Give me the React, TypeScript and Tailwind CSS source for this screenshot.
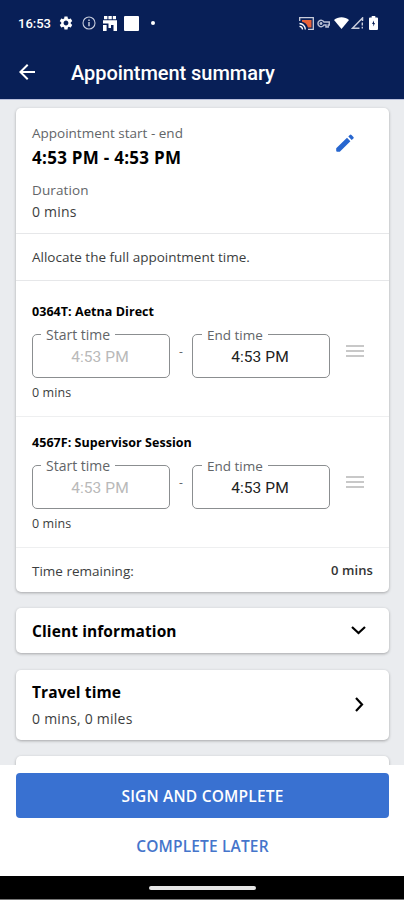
import { MdArrowBack, MdSettings } from "react-icons/md";

const services = [
  { id: 1, name: "0364T: Aetna Direct", start: "4:53 PM", end: "4:53 PM", rowClass: "h-[136px] pt-[20px]" },
  { id: 2, name: "4567F: Supervisor Session", start: "4:53 PM", end: "4:53 PM", rowClass: "h-[131px] pt-[15px]" },
];

function StatusBar() {
  return (
    <div className="flex h-[46px] items-center pl-[18px] pr-[26px] text-white">
      <span className="w-[34px] font-['Roboto',sans-serif] text-[13px] font-medium leading-none">16:53</span>
      <MdSettings size={16} className="ml-[6px]" />
      <svg className="ml-[8px]" width="14" height="14" viewBox="0 0 14 14" fill="none" stroke="#c5cbdc">
        <circle cx="7" cy="7" r="6" strokeWidth="1.1" />
        <path d="M7 6v4.2M7 3.6v1.4" strokeWidth="1.5" />
      </svg>
      <svg className="ml-[7px]" width="14" height="15" viewBox="0 0 14 15" fill="#fff">
        <path d="M1 0h3.4v3.2H1zM5.4 0h3.4v3.2H5.4zM9.8 0H13v3.2H9.8zM0 4.2h14V15h-3.5V9H8v3H5.500V7.500H0zM0 9h3.600v6H0z" />
      </svg>
      <div className="ml-[7px] h-[15px] w-[15px] rounded-[1px] bg-white" />
      <div className="ml-[12px] h-[4px] w-[4px] rounded-full bg-white" />

      {/* Right side indicators */}
      <div className="ml-auto flex items-center">
        <svg width="15" height="13" viewBox="0 0 15 13" fill="none">
          <path d="M.7 4V.7h13.6v11.6H9" stroke="#c9cddb" strokeWidth="1.3" />
          <path d="M3 3h9.5v7.5H9C8 7 6 5.5 3 4.8z" fill="#e8633a" />
          <path d="M.5 6.5a6 6 0 0 1 5.8 6M.5 9.3a3.2 3.2 0 0 1 3 3.2" stroke="#fff" strokeWidth="1.3" />
        </svg>
        <svg className="ml-[3px]" width="13" height="9" viewBox="0 0 13 9" fill="none" stroke="#b9c0d5" strokeWidth="1.5">
          <path d="M7 3A3.2 3.2 0 1 0 7 6H9V8H11.2V6H12.3V3z" />
          <circle cx="4" cy="4.5" r=".7" />
        </svg>
        <svg className="ml-[4px]" width="15" height="12" viewBox="0 0 15 12" fill="#fff">
          <path d="M0 3C4-.8 11-.8 15 3L7.5 12z" />
        </svg>
        <svg className="ml-[2px]" width="13" height="12" viewBox="0 0 13 12" fill="none" stroke="#c9cddb">
          <path d="M8.5 11.2H1.5L11.5 1v3" strokeWidth="1.5" />
          <path d="M11.3 5.5v3M11.3 9.8v1.7" strokeWidth="1.4" />
        </svg>
        <svg className="ml-[5px]" width="9" height="14" viewBox="0 0 9 14">
          <path d="M2.7 0h3.6v1.4H8a1 1 0 0 1 1 1V13a1 1 0 0 1-1 1H1a1 1 0 0 1-1-1V2.4a1 1 0 0 1 1-1h1.7z" fill="#fff" />
          <path d="M5 4.5L3 8h1.3v2.5L6 7H5z" fill="#081f57" />
        </svg>
      </div>
    </div>
  );
}

function TimeField({ label, value, labelClass, valueClass }: any) {
  return (
    <div className="relative flex h-[44px] w-[138px] items-center justify-center rounded-[5px] border-[1.5px] border-[#8b8e90]">
      <span className={`absolute -top-[9px] whitespace-nowrap bg-white px-[5px] leading-[18px] text-[#626568] ${labelClass}`}>
        {label}
      </span>
      <span className={`pr-[2px] pt-[2px] font-['Roboto',sans-serif] text-[15.5px] leading-5 tracking-[0.1px] ${valueClass}`}>
        {value}
      </span>
    </div>
  );
}

function DragHandle() {
  return (
    <div className="mb-[10px] ml-4 flex w-[18px] flex-col gap-[3px]">
      <div className="h-[2px] bg-[#c8c8c8]" />
      <div className="h-[2px] bg-[#c8c8c8]" />
      <div className="h-[2px] bg-[#c8c8c8]" />
    </div>
  );
}

export default function App() {
  return (
    <div className="flex h-[900px] w-[404px] flex-col overflow-hidden bg-[#eaecef] font-['Open_Sans',sans-serif]">
      <header className="h-[100px] shrink-0 border-b border-[#b9bfdc] bg-[#081f57]">
        <StatusBar />
        <div className="flex h-[54px] items-center pl-[15px]">
          <MdArrowBack size={24} className="-mt-[2px] text-white" />
          <h1 className="ml-[32px] font-['Roboto',sans-serif] text-[20px] font-medium leading-none tracking-[-0.05px] text-white">
            Appointment summary
          </h1>
        </div>
      </header>

      <main className="flex min-h-0 flex-1 flex-col gap-4 overflow-hidden pl-4 pr-[15px] pt-2">
        <section className="h-[484px] shrink-0 rounded-[5px] bg-white shadow-[0_1px_3px_rgba(0,0,0,0.3)]">
          {/* Appointment time */}
          <div className="flex h-[126px] justify-between border-b border-[#e6e7e9] pl-4 pr-[34px] pt-[13px]">
            <div>
              <p className="text-[13.5px] leading-6 text-[#626568]">Appointment start - end</p>
              <p className="pt-px text-[17px] font-bold leading-6 tracking-[0.28px] text-black">4:53 PM - 4:53 PM</p>
              <p className="mt-[9px] text-[13.5px] leading-[22px] tracking-[0.1px] text-[#626568]">Duration</p>
              <p className="text-[14px] leading-[22px] tracking-[0.2px] text-[#3c3e40]">0 mins</p>
            </div>
            <svg className="mt-[12px]" width="20" height="20" viewBox="0 0 20 20" fill="#2766cf">
              <path d="M1.2 15.3L12 4.8l3.4 3.4L4.8 18.800H2.200a1 1 0 0 1-1-1zM13.300 3.500l1.500-1.500a1.200 1.200 0 0 1 1.700 0l1.900 1.900a1.200 1.200 0 0 1 0 1.700L16.700 7z" />
            </svg>
          </div>

          <p className="h-[47px] border-b border-[#e6e7e9] pl-4 text-[13.5px] leading-[47px] text-[#3c3e40]">
            Allocate the full appointment time.
          </p>

          {/* Services */}
          {services.map((service) => (
            <div key={service.id} className={`border-b border-[#eeeff0] pl-4 ${service.rowClass}`}>
              <p className="pt-px text-[12.5px] font-bold leading-5 tracking-[0.05px] text-black">{service.name}</p>
              <div className="mt-[12px] flex items-center">
                <TimeField label="Start time" value={service.start} labelClass="left-[8px] text-[14px]" valueClass="text-[#b9b9b9]" />
                <span className="w-[22px] pb-2 text-center text-[12px] leading-4 text-[#626568]">-</span>
                <TimeField label="End time" value={service.end} labelClass="left-[9px] text-[13.5px]" valueClass="text-[#222]" />
                <DragHandle />
              </div>
              <p className="mt-[5px] text-[12.5px] leading-5 tracking-[0.1px] text-[#3c3e40]">0 mins</p>
            </div>
          ))}

          <div className="flex h-[44px] items-center justify-between px-4 pt-[2px] text-[13.5px]">
            <span className="text-[#3c3e40]">Time remaining:</span>
            <span className="text-[13px] font-semibold tracking-[0.1px] text-[#333]">0 mins</span>
          </div>
        </section>

        <section className="flex h-[45px] shrink-0 items-center justify-between rounded-[5px] bg-white pl-4 pr-[23px] shadow-[0_1px_3px_rgba(0,0,0,0.3)]">
          <h2 className="text-[15.5px] font-bold leading-6 tracking-[0.1px] text-black">Client information</h2>
          <svg className="mb-px" width="15" height="9" viewBox="0 0 15 9" fill="none" stroke="#000" strokeWidth="2.2">
            <path d="M1 1l6.5 6L14 1" />
          </svg>
        </section>

        <section className="mt-px flex h-[70px] shrink-0 items-center justify-between rounded-[5px] bg-white pl-4 pr-[25px] shadow-[0_1px_3px_rgba(0,0,0,0.3)]">
          <div>
            <h2 className="text-[15.5px] font-bold leading-6 tracking-[0.1px] text-black">Travel time</h2>
            <p className="mt-[4px] text-[14px] leading-[22px] tracking-[0.25px] text-[#3c3e40]">0 mins, 0 miles</p>
          </div>
          <svg className="mb-px" width="9" height="15" viewBox="0 0 9 15" fill="none" stroke="#000" strokeWidth="2.2">
            <path d="M1 1l6 6.5L1 14" />
          </svg>
        </section>

        <section className="h-[70px] shrink-0 rounded-[5px] bg-white shadow-[0_1px_3px_rgba(0,0,0,0.3)]" />
      </main>

      <footer className="flex h-[111px] shrink-0 flex-col bg-white pl-4 pr-[15px] pt-2">
        <button className="h-[45px] rounded-[4px] bg-[#3971d1] pt-[2px] text-[15.5px] font-semibold tracking-[0.2px] text-white">
          SIGN AND COMPLETE
        </button>
        <button className="mt-[12px] h-[34px] text-[15.5px] font-semibold tracking-[0.15px] text-[#4575cb]">COMPLETE LATER</button>
      </footer>

      <div className="flex h-[24px] shrink-0 items-center justify-center border-b border-[#777] bg-black">
        <div className="h-[4px] w-[107px] rounded-full bg-[#e6e6e6]" />
      </div>
    </div>
  );
}
